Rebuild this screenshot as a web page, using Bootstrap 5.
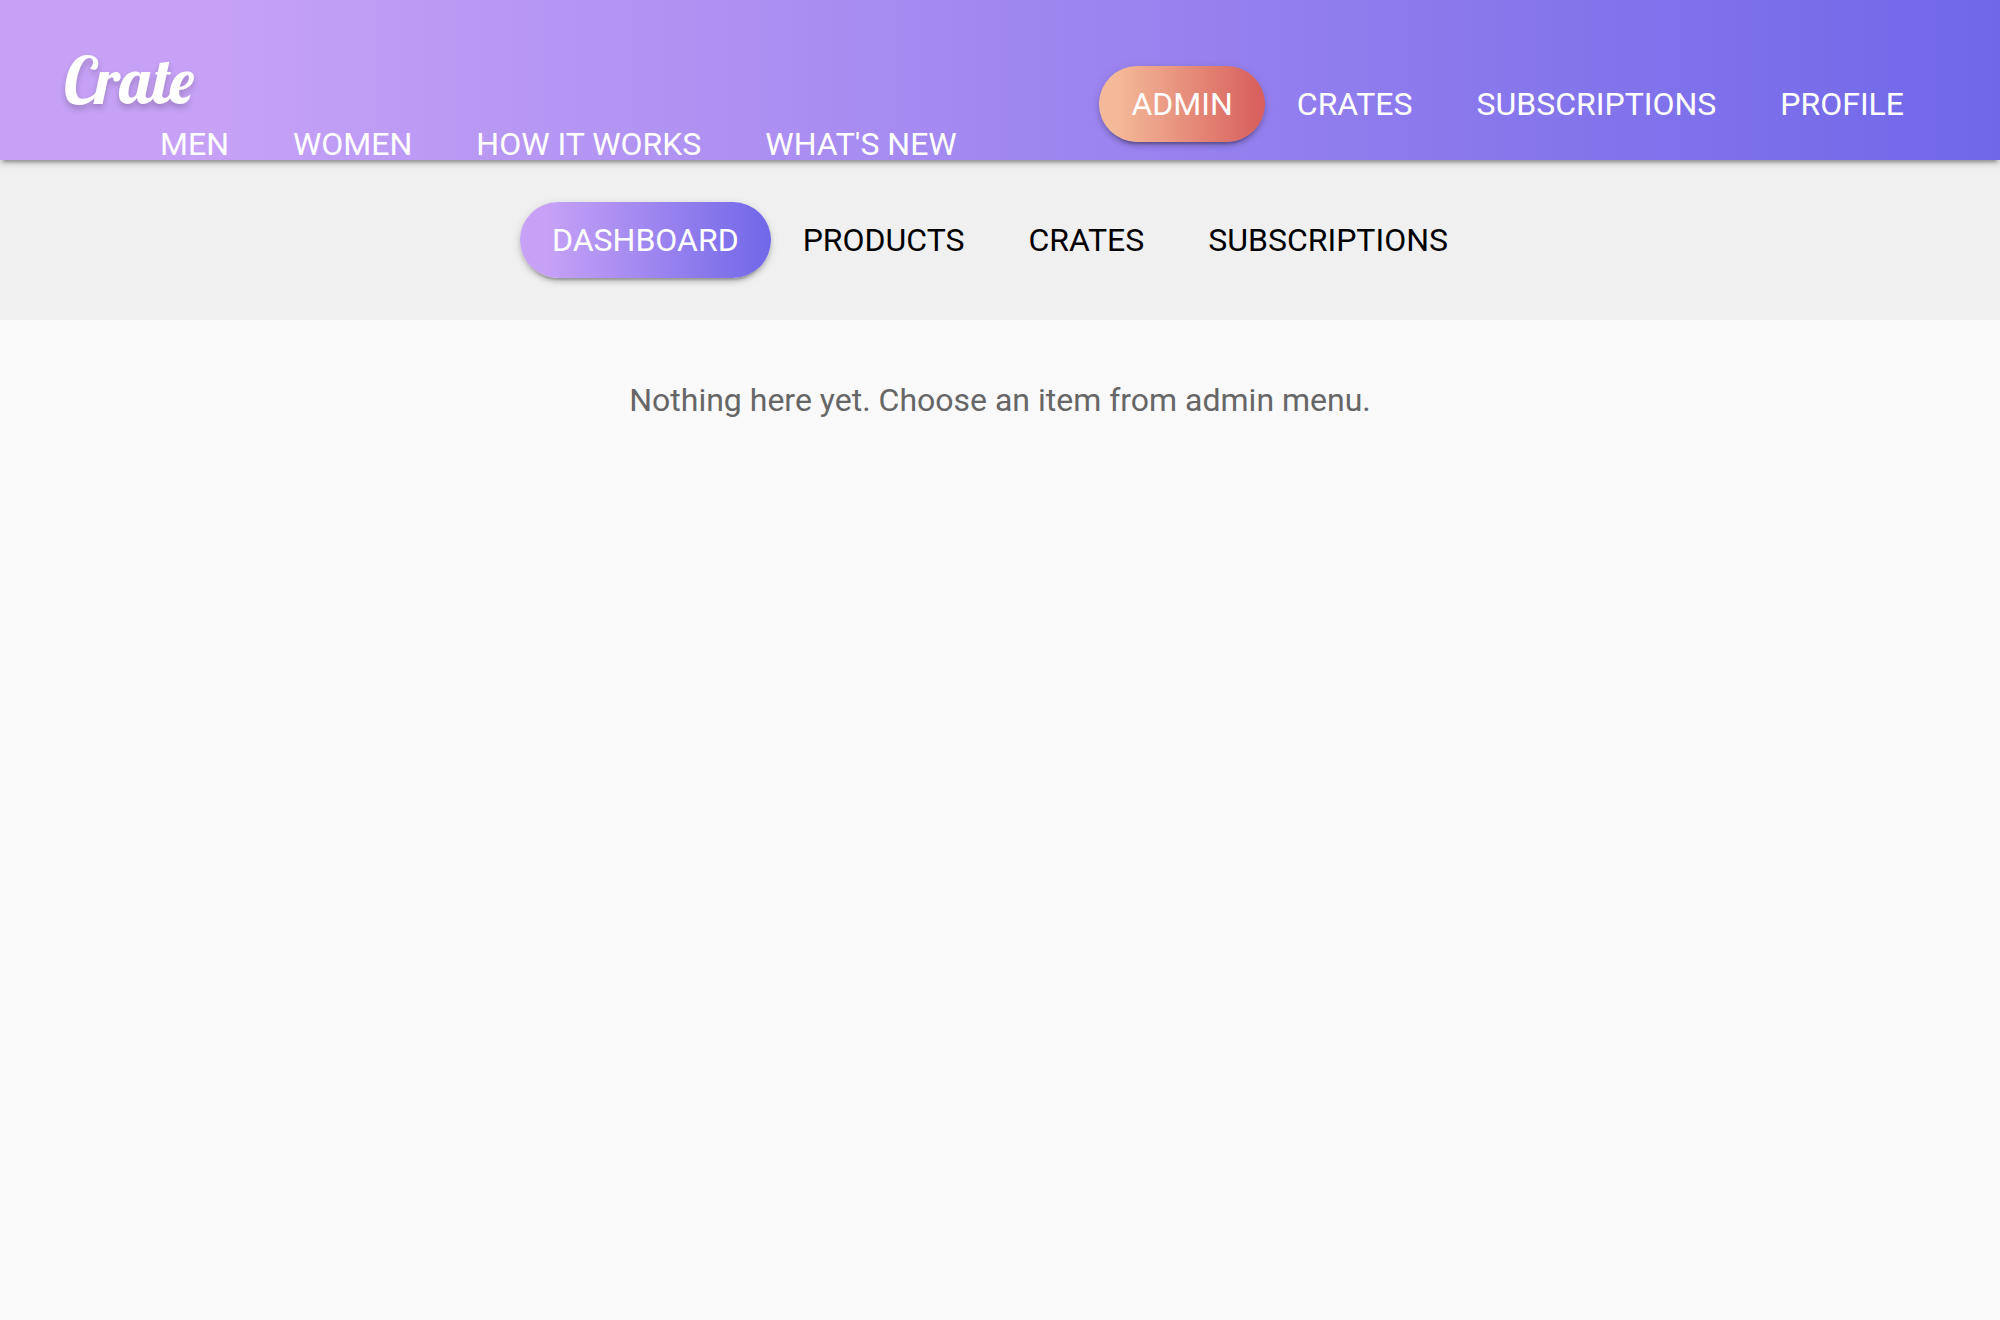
<!DOCTYPE html>
<html lang="en">
<head>
<meta charset="utf-8">
<meta name="viewport" content="width=device-width, initial-scale=1">
<title>Crate - Admin</title>
<link href="https://cdn.jsdelivr.net/npm/bootstrap@5.3.0/dist/css/bootstrap.min.css" rel="stylesheet">
<style>
  :root {
    --grad-primary: linear-gradient(to right, #c6a1f6 11%, #7067e8);
    --grad-accent: linear-gradient(to right, #f4b998 11%, #d75d5b);
    --lift: 0 4px 4px rgba(0, 0, 0, .14), 0 6px 2px -4px rgba(0, 0, 0, .2), 0 2px 10px rgba(0, 0, 0, .12);
  }
  body {
    background: #f9f9f9;
    font-family: Roboto, "Liberation Sans", sans-serif;
    font-size: 32px;
    line-height: 38px;
  }
  .site-header {
    background: var(--grad-primary);
    box-shadow: var(--lift);
    height: 160px;
    padding: 0 64px;
    z-index: 1;
  }
  .brand-block { padding-top: 40px; }
  .site-logo {
    color: #fff;
    font-family: Lobster, "Liberation Serif", serif;
    font-size: 64px;
    font-weight: 400;
    line-height: 80px;
    margin-bottom: 5px;
    text-shadow: 0 4px 6px rgba(0, 0, 0, .2);
  }
  .main-menu { padding-left: 64px; }
  .account-menu { padding-top: 66px; }
  .menu-link {
    border-radius: 38px;
    color: #fff;
    display: block;
    padding: 0 32px;
    text-decoration: none;
    text-transform: uppercase;
    white-space: nowrap;
  }
  .menu-pill { padding: 19px 32px; }
  .sub-header { background: #f0f0f0; padding: 42px 0; }
  .sub-header .menu-link { color: #000; }
  .sub-header .menu-link.is-current { background: var(--grad-primary); box-shadow: var(--lift); color: #fff; }
  .account-menu .is-current { background: var(--grad-accent); box-shadow: var(--lift); }
  .empty-note { color: #666; padding: 61px 0; }
</style>
</head>
<body>
<header class="site-header position-relative d-flex justify-content-between align-items-start">
  <div class="brand-block">
    <a class="site-logo d-block text-decoration-none" href="#">Crate</a>
    <nav aria-label="Main">
      <ul class="main-menu list-unstyled d-flex mb-0">
        <li><a class="menu-link" href="#">Men</a></li>
        <li><a class="menu-link" href="#">Women</a></li>
        <li><a class="menu-link" href="#">How it works</a></li>
        <li><a class="menu-link" href="#">What's new</a></li>
      </ul>
    </nav>
  </div>
  <nav class="account-menu" aria-label="Account">
    <ul class="list-unstyled d-flex mb-0">
      <li><a class="menu-link menu-pill is-current" href="#" aria-current="page">Admin</a></li>
      <li><a class="menu-link menu-pill" href="#">Crates</a></li>
      <li><a class="menu-link menu-pill" href="#">Subscriptions</a></li>
      <li><a class="menu-link menu-pill" href="#">Profile</a></li>
    </ul>
  </nav>
</header>
<nav class="sub-header" aria-label="Admin">
  <ul class="list-unstyled d-flex justify-content-center mb-0">
    <li><a class="menu-link menu-pill is-current" href="#" aria-current="page">Dashboard</a></li>
    <li><a class="menu-link menu-pill" href="#">Products</a></li>
    <li><a class="menu-link menu-pill" href="#">Crates</a></li>
    <li><a class="menu-link menu-pill" href="#">Subscriptions</a></li>
  </ul>
</nav>
<main>
  <p class="empty-note text-center mb-0">Nothing here yet. Choose an item from admin menu.</p>
</main>
<script src="https://cdn.jsdelivr.net/npm/bootstrap@5.3.0/dist/js/bootstrap.bundle.min.js"></script>
</body>
</html>
